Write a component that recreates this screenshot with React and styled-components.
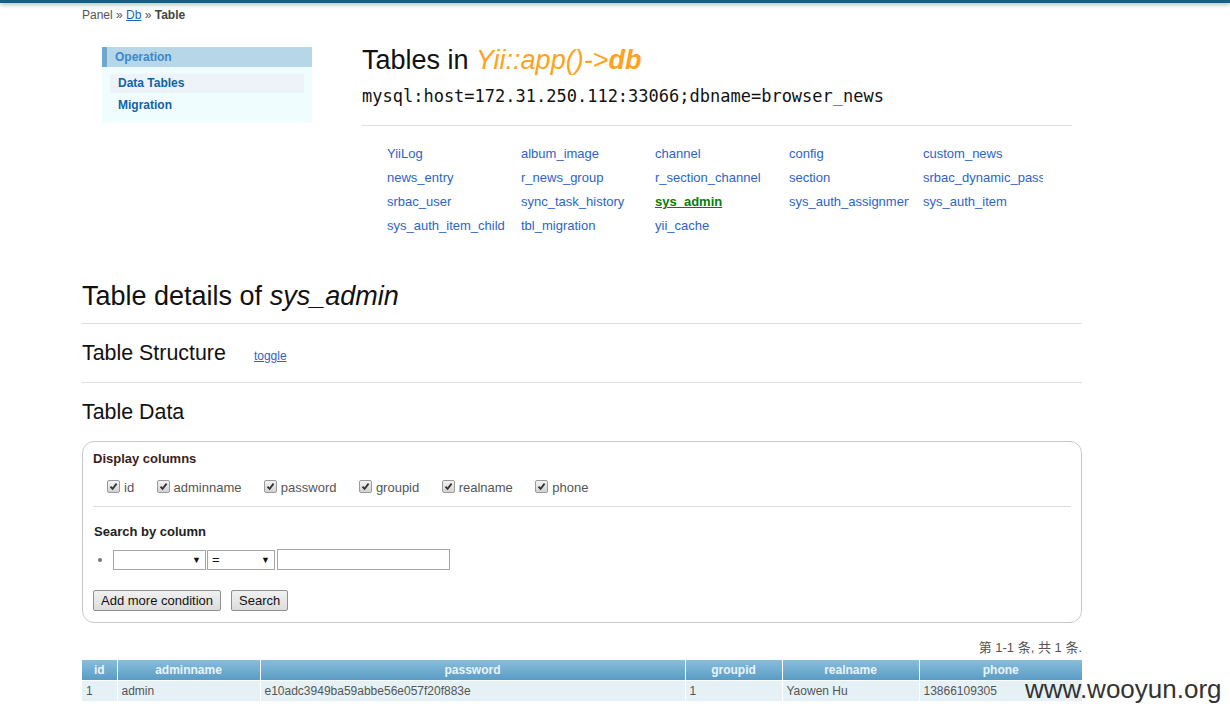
import React from "react";
import styled, { createGlobalStyle } from "styled-components";

const GlobalStyle = createGlobalStyle`
  body {
    margin: 0;
    background: #fff;
    font-family: "Liberation Sans", Arial, sans-serif;
    color: #333;
  }
`;

const TopBar = styled.div`
  height: 3px;
  background: #185d88;
  box-shadow: 0 1px 5px rgba(0, 0, 0, 0.45);
`;

const Page = styled.div`
  width: 1000px;
  margin-left: 82px;
  padding-bottom: 20px;
`;

const Breadcrumb = styled.div`
  margin-top: 5px;
  font-size: 12px;
  line-height: 14px;
  color: #555;
  a {
    color: #1f5fbf;
    text-decoration: underline;
  }
  b {
    color: #444;
  }
`;

const Columns = styled.div`
  display: flex;
  margin-top: 22px;
`;

const SideCol = styled.div`
  width: 280px;
  flex-shrink: 0;
`;

const Portlet = styled.div`
  width: 210px;
  margin: 3px 0 0 20px;
  background: #effdff;
`;

const PortletTitle = styled.div`
  height: 20px;
  line-height: 20px;
  padding-left: 8px;
  border-left: 5px solid #6ea8cf;
  background: #b7d6e7;
  color: #3889cf;
  font-size: 12px;
  font-weight: bold;
`;

const PortletBody = styled.div`
  padding: 7px 8px 8px;
`;

const MenuItem = styled.a`
  display: block;
  height: 19px;
  line-height: 19px;
  margin-bottom: 3px;
  padding-left: 8px;
  font-size: 12px;
  font-weight: bold;
  color: #0f62a8;
  text-decoration: none;
  background: ${(p) => (p.$active ? "#eef3fa" : "transparent")};
  &:last-child {
    margin-bottom: 0;
  }
`;

const MainCol = styled.div`
  width: 710px;
`;

const Title = styled.h1`
  margin: 0;
  font-size: 27px;
  line-height: 32px;
  font-weight: normal;
  color: #111;
`;

const Orange = styled.em`
  color: #ffa31a;
  b {
    font-weight: bold;
  }
`;

const Dsn = styled.div`
  margin-top: 10px;
  font-family: "DejaVu Sans Mono", monospace;
  font-size: 17px;
  line-height: 20px;
  color: #111;
`;

const Rule = styled.hr`
  margin: ${(p) => p.$m || "0"};
  border: 0;
  border-top: 1px solid #ddd;
  height: 0;
`;

const TableGrid = styled.div`
  display: grid;
  grid-template-columns: repeat(5, 120px);
  column-gap: 14px;
  margin-top: 16px;
  padding-left: 25px;
`;

const TableLink = styled.a`
  display: block;
  overflow: hidden;
  white-space: nowrap;
  line-height: 24px;
  font-size: 13px;
  color: ${(p) => (p.$active ? "#0b7a0b" : "#2f63c4")};
  font-weight: ${(p) => (p.$active ? "bold" : "normal")};
  text-decoration: ${(p) => (p.$active ? "underline" : "none")};
`;

const Section = styled.div`
  margin-top: ${(p) => p.$top || "0"};
`;

const SubTitle = styled.h2`
  display: flex;
  align-items: baseline;
  height: 24px;
  margin: 17px 0 0;
  font-size: 21.4px;
  line-height: 24px;
  font-weight: normal;
  color: #111;
`;

const Toggle = styled.a`
  margin-left: 28px;
  font-size: 12px;
  color: #2f63c4;
  text-decoration: underline;
`;

const FormBox = styled.div`
  margin-top: 17px;
  border: 1px solid #c8c8c8;
  border-radius: 12px;
  padding: 9px 10px 11px;
`;

const Label = styled.div`
  font-size: 13px;
  line-height: 16px;
  font-weight: bold;
  color: ${(p) => (p.$dark ? "#222" : "#3b1d1d")};
  margin-top: ${(p) => p.$top || "0"};
  padding-left: ${(p) => p.$left || "0"};
`;

const CheckRow = styled.div`
  display: flex;
  gap: 22.4px;
  margin-top: 13px;
  padding-left: 14px;
  font-size: 13px;
  line-height: 16px;
  color: #555;
`;

const CheckItem = styled.label`
  display: flex;
  align-items: center;
  gap: 4px;
`;

const Box = styled.span`
  display: inline-flex;
  align-items: center;
  justify-content: center;
  width: 11px;
  height: 11px;
  border: 1px solid #9a9a9a;
  border-radius: 2px;
  background: linear-gradient(#f4f4f4, #d2d2d2);
  margin-top: -3px;
`;

const Condition = styled.div`
  display: flex;
  align-items: center;
  margin-top: 9px;
  padding-left: 5px;
`;

const Bullet = styled.span`
  width: 4px;
  height: 4px;
  border-radius: 50%;
  background: #777;
  margin-right: 11px;
`;

const SelectBox = styled.div`
  display: flex;
  align-items: center;
  justify-content: space-between;
  box-sizing: border-box;
  width: ${(p) => p.$w}px;
  height: 20px;
  margin-right: 1px;
  padding: 0 4px;
  border: 1px solid #a5a5a5;
  background: #fff;
  font-size: 13px;
  color: #111;
  span {
    font-size: 9px;
  }
`;

const TextInput = styled.input`
  box-sizing: border-box;
  width: 173px;
  height: 21px;
  margin-left: 1px;
  border: 1px solid #a5a5a5;
  padding: 0 3px;
`;

const Buttons = styled.div`
  display: flex;
  gap: 10px;
  margin-top: 20px;
`;

const Button = styled.button`
  height: 21px;
  padding: 0 7px;
  border: 1px solid #8f8f8f;
  border-radius: 2px;
  background: linear-gradient(#f1f1f1, #dcdcdc);
  font-family: "Liberation Sans", Arial, sans-serif;
  font-size: 13px;
  color: #111;
`;

const Pager = styled.div`
  margin-top: 17px;
  text-align: right;
  font-family: "Liberation Sans", "Noto Sans CJK SC", sans-serif;
  font-size: 13px;
  line-height: 16px;
  color: #555;
`;

const Grid = styled.table`
  width: 1000px;
  margin-top: 4px;
  border-collapse: collapse;
  table-layout: fixed;
  font-size: 12px;
`;

const Th = styled.th`
  height: 20px;
  padding: 0;
  border: 1px solid #fff;
  border-top: 0;
  background: linear-gradient(#88bddb, #5a9cc5);
  color: #eaf4fa;
  font-weight: bold;
  text-align: center;
  &:first-child {
    border-left: 0;
  }
  &:last-child {
    border-right: 0;
  }
`;

const Td = styled.td`
  height: 20px;
  padding: 0 4px;
  border: 1px solid #fff;
  background: #e5f1f4;
  color: #555;
  &:first-child {
    border-left: 0;
  }
  &:last-child {
    border-right: 0;
  }
`;

const Watermark = styled.div`
  position: absolute;
  left: 1025px;
  top: 674px;
  font-size: 26px;
  line-height: 30px;
  color: #333;
`;

const tables = [
  "YiiLog", "album_image", "channel", "config", "custom_news",
  "news_entry", "r_news_group", "r_section_channel", "section", "srbac_dynamic_password",
  "srbac_user", "sync_task_history", "sys_admin", "sys_auth_assignment", "sys_auth_item",
  "sys_auth_item_child", "tbl_migration", "yii_cache",
];

const columns = [
  { name: "id", width: 35 },
  { name: "adminname", width: 143 },
  { name: "password", width: 425 },
  { name: "groupid", width: 97 },
  { name: "realname", width: 137 },
  { name: "phone", width: 163 },
];

const row = ["1", "admin", "e10adc3949ba59abbe56e057f20f883e", "1", "Yaowen Hu", "13866109305"];

const Check = () => (
  <Box>
    <svg width="9" height="9" viewBox="0 0 9 9">
      <path d="M1.5 4.6 L3.6 6.8 L7.6 1.6" fill="none" stroke="#333" strokeWidth="1.8" />
    </svg>
  </Box>
);

export default function App() {
  return (
    <>
      <GlobalStyle />
      <TopBar />
      <Page>
        <Breadcrumb>
          Panel » <a href="#">Db</a> » <b>Table</b>
        </Breadcrumb>

        <Columns>
          <SideCol>
            <Portlet>
              <PortletTitle>Operation</PortletTitle>
              <PortletBody>
                <MenuItem href="#" $active>Data Tables</MenuItem>
                <MenuItem href="#">Migration</MenuItem>
              </PortletBody>
            </Portlet>
          </SideCol>
          <MainCol>
            <Title>
              Tables in <Orange>Yii::app()-&gt;<b>db</b></Orange>
            </Title>
            <Dsn>mysql:host=172.31.250.112:33066;dbname=browser_news</Dsn>
            <Rule $m="19px 0 0" />
            <TableGrid>
              {tables.map((t) => (
                <TableLink key={t} href="#" $active={t === "sys_admin"}>
                  {t}
                </TableLink>
              ))}
            </TableGrid>
          </MainCol>
        </Columns>

        <Section $top="42px">
          <Title>
            Table details of <em>sys_admin</em>
          </Title>
          <Rule $m="11px 0 0" />
          <SubTitle>
            Table Structure <Toggle href="#">toggle</Toggle>
          </SubTitle>
          <Rule $m="17px 0 0" />
          <SubTitle>Table Data</SubTitle>
        </Section>

        <FormBox>
          <Label>Display columns</Label>
          <CheckRow>
            {columns.map((c) => (
              <CheckItem key={c.name}>
                <Check />
                {c.name}
              </CheckItem>
            ))}
          </CheckRow>
          <Rule $m="10px 0 0" />
          <Label $dark $top="17px" $left="1px">Search by column</Label>
          <Condition>
            <Bullet />
            <SelectBox $w={93}>
              <i />
              <span>▼</span>
            </SelectBox>
            <SelectBox $w={68}>
              =<span>▼</span>
            </SelectBox>
            <TextInput type="text" />
          </Condition>
          <Buttons>
            <Button>Add more condition</Button>
            <Button>Search</Button>
          </Buttons>
        </FormBox>

        <Pager>第 1-1 条, 共 1 条.</Pager>

        <Grid>
          <colgroup>
            {columns.map((c) => (
              <col key={c.name} style={{ width: c.width }} />
            ))}
          </colgroup>
          <thead>
            <tr>
              {columns.map((c) => (
                <Th key={c.name}>{c.name}</Th>
              ))}
            </tr>
          </thead>
          <tbody>
            <tr>
              {row.map((v, i) => (
                <Td key={i}>{v}</Td>
              ))}
            </tr>
          </tbody>
        </Grid>
      </Page>
      <Watermark>www.wooyun.org</Watermark>
    </>
  );
}
